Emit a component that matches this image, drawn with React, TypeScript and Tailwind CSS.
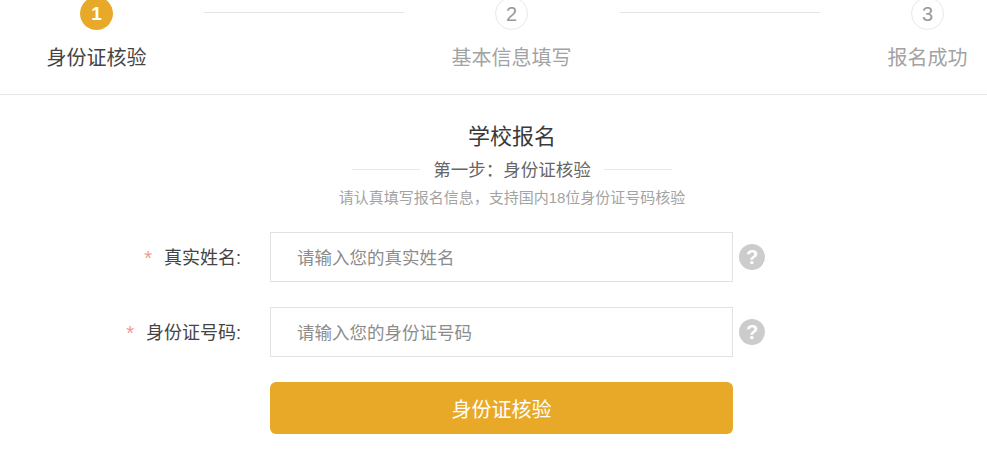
const font = 'font-["Liberation_Sans","Noto_Sans_CJK_SC",sans-serif]';

const steps = [
  { num: '1', label: '身份证核验' },
  { num: '2', label: '基本信息填写' },
  { num: '3', label: '报名成功' },
];

const fields = [
  { label: '真实姓名:', placeholder: '请输入您的真实姓名' },
  { label: '身份证号码:', placeholder: '请输入您的身份证号码' },
];

function Stepper() {
  return (
    <div className="flex h-[95px] items-start overflow-hidden border-b border-[#e5e5e5] pl-[36px]">
      {steps.map((step, i) => (
        <div key={step.num} className="flex shrink-0 items-start">
          <div className="-mt-[3px] flex w-[121px] flex-col items-center">
            {i === 0 ? (
              <div className="flex h-[33px] w-[33px] items-center justify-center rounded-full bg-[#e9a928] text-[19px] font-bold leading-none text-white">
                {step.num}
              </div>
            ) : (
              <div className="flex h-[33px] w-[33px] items-center justify-center rounded-full border border-[#e8e8e8] text-[20px] leading-none text-[#999]">
                {step.num}
              </div>
            )}
            <div className={`mt-[13px] text-[20px] leading-[30px] whitespace-nowrap ${i === 0 ? 'text-[#444]' : 'text-[#a3a3a3]'}`}>
              {step.label}
            </div>
          </div>
          {i < 2 && <div className={`mr-[47px] mt-[12px] h-px w-[200px] bg-[#e5e5e5] ${i === 0 ? 'ml-[47px]' : 'ml-[48px]'}`} />}
        </div>
      ))}
    </div>
  );
}

function Field({ label, placeholder }: { label: string; placeholder: string }) {
  return (
    <div className="flex items-center">
      <label className="flex w-[241px] justify-end pt-[2px] text-[18px] text-[#444]">
        <span className="mr-[12px] text-[20px] leading-[27px] text-[#ee9a8e]">*</span>
        {label}
      </label>
      <input
        className="ml-[29px] h-[50px] w-[463px] border border-[#e2e2e2] pl-[26px] pt-[2px] text-[17.5px] outline-none placeholder:text-[#8c8c8c]"
        placeholder={placeholder}
      />
      <div className="ml-[6px] flex h-[26px] w-[26px] items-center justify-center rounded-full bg-[#ccc] text-[20px] font-bold leading-none text-white">
        ?
      </div>
    </div>
  );
}

export default function App() {
  return (
    <div className={`h-[452px] w-[987px] overflow-hidden bg-white ${font}`}>
      <Stepper />
      <div className="flex flex-col items-center pl-[37px] pt-[26px]">
        <h1 className="text-[22px] leading-[32px] text-[#3a3a3a]">学校报名</h1>
        <div className="mt-[4px] flex items-center text-[#666]">
          <span className="mb-[2px] h-px w-[68px] bg-[#e8e8e8]" />
          <span className="mx-[13px] text-[17.5px] leading-[26px]">第一步：身份证核验</span>
          <span className="mb-[2px] h-px w-[68px] bg-[#e8e8e8]" />
        </div>
        <p className="mt-[4px] text-[15px] leading-[22px] text-[#a3a3a3]">请认真填写报名信息，支持国内18位身份证号码核验</p>
      </div>
      <div className="mt-[23px] flex flex-col gap-[25px]">
        {fields.map((f) => (
          <Field key={f.label} label={f.label} placeholder={f.placeholder} />
        ))}
        <div className="pl-[270px]">
          <button className="h-[52px] w-[463px] rounded-[6px] bg-[#e9a928] pt-[4px] text-[20px] text-white">身份证核验</button>
        </div>
      </div>
    </div>
  );
}
